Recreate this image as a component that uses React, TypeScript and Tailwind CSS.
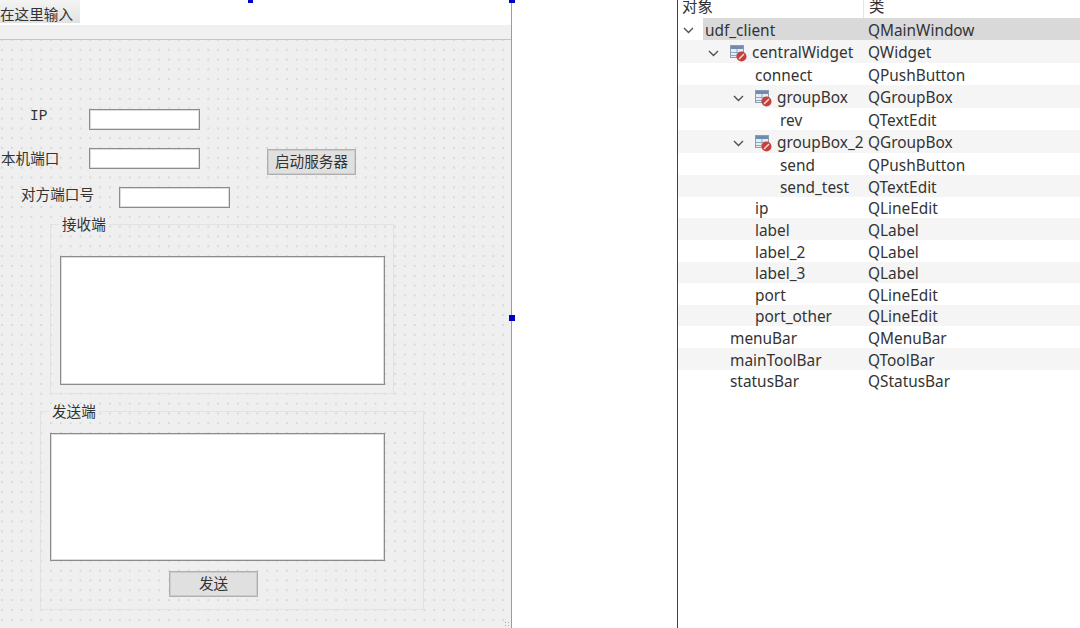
import React from "react";

type Row = {
  name: string;
  cls: string;
  depth: number;
  h: number;
  arrow?: boolean;
  icon?: boolean;
  selected?: boolean;
};

const rows: Row[] = [
  { name: "udf_client", cls: "QMainWindow", depth: 0, h: 22, arrow: true, selected: true },
  { name: "centralWidget", cls: "QWidget", depth: 1, h: 23, arrow: true, icon: true },
  { name: "connect", cls: "QPushButton", depth: 2, h: 22 },
  { name: "groupBox", cls: "QGroupBox", depth: 2, h: 23, arrow: true, icon: true },
  { name: "rev", cls: "QTextEdit", depth: 3, h: 22 },
  { name: "groupBox_2", cls: "QGroupBox", depth: 2, h: 23, arrow: true, icon: true },
  { name: "send", cls: "QPushButton", depth: 3, h: 22 },
  { name: "send_test", cls: "QTextEdit", depth: 3, h: 22 },
  { name: "ip", cls: "QLineEdit", depth: 2, h: 21 },
  { name: "label", cls: "QLabel", depth: 2, h: 22 },
  { name: "label_2", cls: "QLabel", depth: 2, h: 22 },
  { name: "label_3", cls: "QLabel", depth: 2, h: 21 },
  { name: "port", cls: "QLineEdit", depth: 2, h: 22 },
  { name: "port_other", cls: "QLineEdit", depth: 2, h: 21 },
  { name: "menuBar", cls: "QMenuBar", depth: 1, h: 22 },
  { name: "mainToolBar", cls: "QToolBar", depth: 1, h: 22 },
  { name: "statusBar", cls: "QStatusBar", depth: 1, h: 21 },
];

const depthPad = ["pl-[5px]", "pl-[30px]", "pl-[55px]", "pl-[80px]"];

const WidgetIcon = () => (
  <svg width="17" height="17" viewBox="0 0 17 17" className="shrink-0 mr-[5px]">
    <rect x="0.5" y="0.5" width="13" height="12" fill="#e6edf5" stroke="#8a9db3" />
    <rect x="1" y="1" width="12" height="3" fill="#6d8cb0" />
    <path d="M1 7.5 H13 M1 10.5 H13 M7 4 V12" stroke="#8fa6c0" strokeWidth="1" />
    <circle cx="11.5" cy="11.5" r="5" fill="#c4403a" />
    <path d="M9 14 L14 9" stroke="#f6dcda" strokeWidth="1.4" />
  </svg>
);

const Arrow = () => (
  <svg width="11" height="7" viewBox="0 0 11 7" className="shrink-0">
    <path d="M1 1 L5.5 5.5 L10 1" fill="none" stroke="#505050" strokeWidth="1.4" />
  </svg>
);

const Edit = ({ className }: { className: string }) => (
  <div className={`shrink-0 bg-white border border-[#8c8c8c] shadow-[inset_0_0_0_1px_#dcdcdc] ${className}`} />
);

const Btn = ({ className, children }: { className: string; children: React.ReactNode }) => (
  <div className={`shrink-0 flex items-center justify-center bg-[#e0e0e0] border border-[#b0b0b0] shadow-[inset_0_0_0_1px_#cccccc] text-[14.6px] text-[#333] ${className}`}>
    {children}
  </div>
);

const Group = ({ className, title, children }: { className: string; title: string; children: React.ReactNode }) => (
  <div className={`relative shrink-0 border border-[#e2e2e2] ${className}`}>
    <span className="absolute left-[8px] -top-[8px] bg-[#efefef] px-[3px] text-[14.6px] leading-none text-[#333]">{title}</span>
    {children}
  </div>
);

export default function App() {
  return (
    <div className="w-[1080px] h-[628px] flex bg-white overflow-hidden font-['Noto_Sans','Noto_Sans_CJK_SC',sans-serif]">
      {/* form designer */}
      <div className="relative w-[512px] h-full border-r border-[#9c9c9c] shrink-0 flex flex-col">
        <div className="h-6 flex items-start">
          <div className="h-[23px] w-[80px] pt-[4px] text-[14.6px] leading-[20px] text-[#333] bg-gradient-to-b from-[#f4f4f4] to-[#e2e2e2]">
            在这里输入
          </div>
        </div>
        <div className="h-[15px] mt-[1px] bg-[#f0f0f0] border-b border-[#c4c4c4]" />
        <div className="relative flex-1 flex flex-col items-start pt-[69px] text-[14.6px] text-[#333] bg-[#efefef] bg-[radial-gradient(circle,#a0a0a0_0.55px,transparent_0.75px)] bg-[size:9.83px_9.83px] bg-[position:-3px_-5px]">
          <div className="flex items-start pl-[30px]">
            <div className="w-[59px] leading-[14px] font-['Liberation_Mono']">IP</div>
            <Edit className="w-[111px] h-[21px]" />
          </div>
          <div className="flex items-start pl-[1px] mt-[18px]">
            <div className="w-[88px] leading-[20px]">本机端口</div>
            <Edit className="w-[111px] h-[21px]" />
            <Btn className="ml-[67px] mt-[1px] w-[89px] h-[26px]">启动服务器</Btn>
          </div>
          <div className="flex items-start pl-[21px] mt-[12px]">
            <div className="w-[98px] leading-[15px]">对方端口号</div>
            <Edit className="w-[111px] h-[21px]" />
          </div>

          <Group className="ml-[50px] mt-[16px] w-[344px] h-[170px] pl-[9px] pt-[31px]" title="接收端">
            <Edit className="w-[325px] h-[129px]" />
          </Group>

          <Group className="ml-[40px] mt-[17px] w-[384px] h-[199px] pl-[9px] pt-[21px]" title="发送端">
            <Edit className="w-[335px] h-[128px]" />
            <Btn className="ml-[119px] mt-[10px] w-[89px] h-[26px]">发送</Btn>
          </Group>

          <div className="absolute right-[1px] bottom-[1px] w-[6px] h-[6px] bg-[radial-gradient(circle,#aaa_1px,transparent_1px)] bg-[size:3px_3px]" />
        </div>
        {/* selection handles */}
        <div className="absolute left-[248px] top-0 w-[5px] h-[3px] bg-[#0000c8]" />
        <div className="absolute left-[509px] top-0 w-[6px] h-[3px] bg-[#0000c8]" />
        <div className="absolute left-[509px] top-[315px] w-[6px] h-[6px] bg-[#0000c8]" />
      </div>

      <div className="w-[165px] shrink-0" />

      {/* object inspector */}
      <div className="flex-1 border-l border-[#404040] min-w-0 text-[15.4px] text-[#333]">
        <div className="h-[18px] flex leading-[13px] bg-white">
          <div className="w-[186px] pl-[4px] border-r border-[#e5e5e5]">对象</div>
          <div className="pl-[5px]">类</div>
        </div>
        {rows.map((r, i) => (
          <div
            key={r.name}
            style={{ height: r.h }}
            className={`relative flex items-center ${i % 2 === 1 ? "bg-[#f5f5f5]" : "bg-white"}`}
          >
            {r.selected && <div className="absolute left-[25px] top-0 bottom-0 right-0 bg-[#d9d9d9]" />}
            <div className={`relative w-[186px] pt-[3px] flex items-center whitespace-nowrap ${depthPad[r.depth]}`}>
              <span className="w-[22px] shrink-0 flex">{r.arrow && <Arrow />}</span>
              {r.icon && <WidgetIcon />}
              {r.name}
            </div>
            <div className="relative pl-[4px] pt-[3px] whitespace-nowrap">{r.cls}</div>
          </div>
        ))}
      </div>
    </div>
  );
}
